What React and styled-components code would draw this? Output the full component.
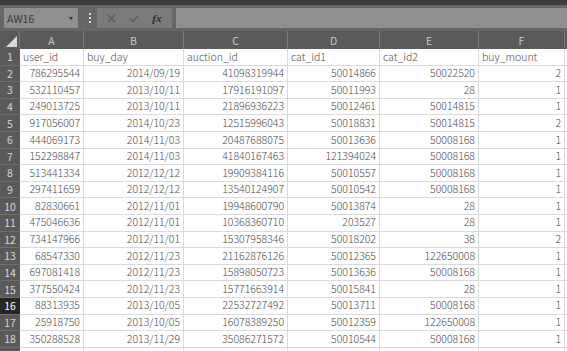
import React from "react"
import styled, { createGlobalStyle } from "styled-components"

const GlobalStyle = createGlobalStyle`
  html, body {
    margin: 0;
    padding: 0;
    background: #5e5e5e;
    overflow: hidden;
  }
  body {
    font-family: "Noto Sans CJK JP", "Noto Sans", sans-serif;
  }
`

// the last column is only a sliver at the right edge, so it gets no letter
const columns = [
  { key: "A", width: 64 },
  { key: "B", width: 100 },
  { key: "C", width: 104 },
  { key: "D", width: 92 },
  { key: "E", width: 99 },
  { key: "F", width: 86 },
  { key: "", width: 30 },
]

const rows = [
  ["786295544", "2014/09/19", "41098319944", "50014866", "50022520", "2"],
  ["532110457", "2013/10/11", "17916191097", "50011993", "28", "1"],
  ["249013725", "2013/10/11", "21896936223", "50012461", "50014815", "1"],
  ["917056007", "2014/10/23", "12515996043", "50018831", "50014815", "2"],
  ["444069173", "2014/11/03", "20487688075", "50013636", "50008168", "1"],
  ["152298847", "2014/11/03", "41840167463", "121394024", "50008168", "1"],
  ["513441334", "2012/12/12", "19909384116", "50010557", "50008168", "1"],
  ["297411659", "2012/12/12", "13540124907", "50010542", "50008168", "1"],
  ["82830661", "2012/11/01", "19948600790", "50013874", "28", "1"],
  ["475046636", "2012/11/01", "10368360710", "203527", "28", "1"],
  ["734147966", "2012/11/01", "15307958346", "50018202", "38", "2"],
  ["68547330", "2012/11/23", "21162876126", "50012365", "122650008", "1"],
  ["697081418", "2012/11/23", "15898050723", "50013636", "50008168", "1"],
  ["377550424", "2012/11/23", "15771663914", "50015841", "28", "1"],
  ["88313935", "2013/10/05", "22532727492", "50013711", "50008168", "1"],
  ["25918750", "2013/10/05", "16078389250", "50012359", "122650008", "1"],
  ["350288528", "2013/11/29", "35086271572", "50010544", "50008168", "1"],
]

const headerRow = ["user_id", "buy_day", "auction_id", "cat_id1", "cat_id2", "buy_mount"]
const activeRow = 16

const Window = styled.div`
  width: 567px;
  height: 351px;
  display: flex;
  flex-direction: column;
  background: #5e5e5e;
  overflow: hidden;
`

const TopStrip = styled.div`
  height: 5px;
  background: #3c3c3c;
  flex-shrink: 0;
`

const FormulaBar = styled.div`
  height: 26px;
  flex-shrink: 0;
  display: flex;
  align-items: center;
  padding: 0 0 0 4px;
  background: #666666;
`

const NameBox = styled.div`
  width: 74px;
  height: 20px;
  box-sizing: border-box;
  display: flex;
  align-items: center;
  justify-content: space-between;
  padding: 0 5px 0 3px;
  background: #8f8f8f;
  color: #3a3a3a;
  font-size: 10.5px;
`

const Caret = styled.span`
  width: 0;
  height: 0;
  border-left: 2px solid transparent;
  border-right: 2px solid transparent;
  border-top: 3px solid #2e2e2e;
`

const Grip = styled.div`
  width: 15px;
  margin-left: 4px;
  display: flex;
  flex-direction: column;
  align-items: center;
  gap: 2px;
  span {
    width: 2px;
    height: 2px;
    background: #d8d8d8;
  }
`

const ButtonGroup = styled.div`
  width: 75px;
  height: 20px;
  display: flex;
  align-items: center;
  justify-content: space-around;
  padding: 0 4px;
  box-sizing: border-box;
  background: #7b7b7b;
`

const Fx = styled.span`
  font-family: "Liberation Serif", serif;
  font-style: italic;
  font-weight: bold;
  font-size: 11px;
  color: #2a2a2a;
`

const FormulaInput = styled.div`
  flex: 1;
  height: 20px;
  margin-left: 4px;
  background: #8f8f8f;
`

const Grid = styled.div`
  display: grid;
  grid-template-columns: 20px ${columns.map(c => `${c.width}px`).join(" ")};
  grid-template-rows: 18px;
  grid-auto-rows: 16.6px;
  background: #ffffff;
`

const Corner = styled.div`
  position: relative;
  background: #5a5a5a;
  border-right: 1px solid #7a7a7a;
  &::after {
    content: "";
    position: absolute;
    right: 2px;
    bottom: 2px;
    width: 0;
    height: 0;
    border-left: 11px solid transparent;
    border-bottom: 11px solid #dcdcdc;
  }
`

const ColHead = styled.div`
  background: #5a5a5a;
  color: #c8c8c8;
  font-size: 10.5px;
  display: flex;
  align-items: center;
  justify-content: center;
  box-sizing: border-box;
  border-right: 1px solid #7c7c7c;
`

const RowHead = styled.div`
  background: ${p => (p.$active ? "#262626" : "#5a5a5a")};
  color: ${p => (p.$active ? "#ffffff" : "#d6d6d6")};
  font-size: 10.5px;
  display: flex;
  align-items: center;
  justify-content: center;
  box-sizing: border-box;
  border-bottom: 1px solid #6e6e6e;
`

const Cell = styled.div`
  box-sizing: border-box;
  border-right: 1px solid #dadada;
  border-bottom: 1px solid #dadada;
  color: #4a4a4a;
  font-size: 10.5px;
  font-weight: 300;
  line-height: 1;
  padding: 0 3px;
  display: flex;
  align-items: center;
  justify-content: ${p => (p.$right ? "flex-end" : "flex-start")};
  white-space: nowrap;
  overflow: hidden;
`

const emptyRow = ["", "", "", "", "", ""]

export default function App() {
  return (
    <>
      <GlobalStyle />
      <Window>
        <TopStrip />
        <FormulaBar>
          <NameBox>
            AW16
            <Caret />
          </NameBox>
          <Grip>
            <span />
            <span />
            <span />
          </Grip>
          <ButtonGroup>
            <svg width="9" height="9" viewBox="0 0 9 9">
              <path d="M1 1 L8 8 M8 1 L1 8" stroke="#5a5a5a" strokeWidth="1.2" />
            </svg>
            <svg width="10" height="9" viewBox="0 0 10 9">
              <path d="M1 4.5 L4 7.5 L9 1.5" stroke="#5a5a5a" strokeWidth="1.2" fill="none" />
            </svg>
            <Fx>fx</Fx>
          </ButtonGroup>
          <FormulaInput />
        </FormulaBar>
        <Grid>
          <Corner />
          {columns.map((c, i) => (
            <ColHead key={i}>{c.key}</ColHead>
          ))}

          <RowHead>1</RowHead>
          {headerRow.map(h => (
            <Cell key={h}>{h}</Cell>
          ))}
          <Cell />

          {rows.map((r, i) => (
            <React.Fragment key={i}>
              <RowHead $active={i + 2 === activeRow}>{i + 2}</RowHead>
              {r.map((v, j) => (
                <Cell key={j} $right>
                  {v}
                </Cell>
              ))}
              <Cell />
            </React.Fragment>
          ))}

          {/* row 19 is only a few pixels tall at the bottom edge */}
          <RowHead />
          {emptyRow.map((v, j) => (
            <Cell key={j} />
          ))}
          <Cell />
        </Grid>
      </Window>
    </>
  )
}
